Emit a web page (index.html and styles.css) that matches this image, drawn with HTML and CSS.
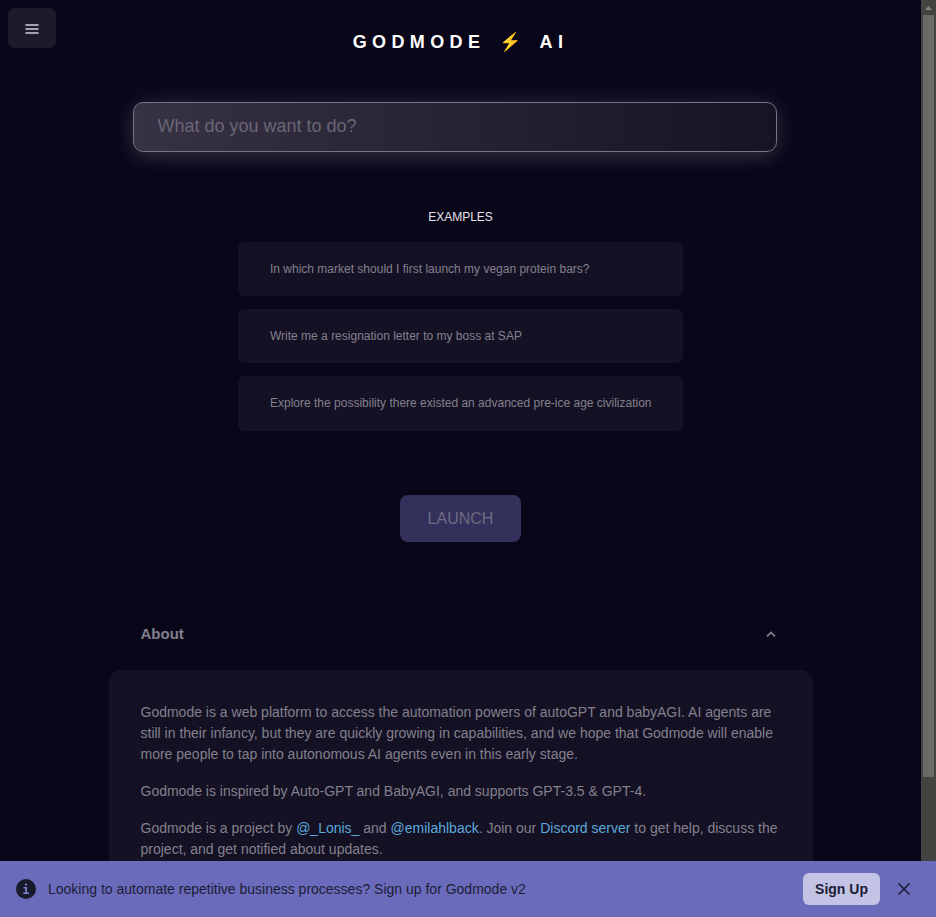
FILE: index.html
```html
<!DOCTYPE html>
<html lang="en">
<head>
<meta charset="utf-8">
<title>Godmode</title>
<link rel="stylesheet" href="styles.css">
</head>
<body>
<div class="viewport">
  <main class="page">
    <button class="menu" aria-label="Menu">
      <svg width="16" height="16" viewBox="0 0 16 16" fill="none" stroke="#a5a1b5" stroke-width="2" stroke-linecap="round"><path d="M2.2 4h11.6M2.2 8h11.6M2.2 12h11.6"/></svg>
    </button>
    <h1 class="title">GODMODE ⚡ AI</h1>
    <div class="container">
      <input class="prompt" type="text" placeholder="What do you want to do?">
      <section class="examples">
        <h2 class="examples-title">EXAMPLES</h2>
        <div class="example">In which market should I first launch my vegan protein bars?</div>
        <div class="example">Write me a resignation letter to my boss at SAP</div>
        <div class="example">Explore the possibility there existed an advanced pre-ice age civilization</div>
      </section>
      <button class="launch">LAUNCH</button>
      <div class="about-head">
        <span>About</span>
        <svg width="12" height="12" viewBox="0 0 12 12" fill="none" stroke="#85828f" stroke-width="1.7"><path d="M2 8.3 6 4.4l4 3.9"/></svg>
      </div>
      <section class="about">
        <p>Godmode is a web platform to access the automation powers of autoGPT and babyAGI. AI agents are still in their infancy, but they are quickly growing in capabilities, and we hope that Godmode will enable more people to tap into autonomous AI agents even in this early stage.</p>
        <p>Godmode is inspired by Auto-GPT and BabyAGI, and supports GPT-3.5 &amp; GPT-4.</p>
        <p>Godmode is a project by <a>@_Lonis_</a> and <a>@emilahlback</a>. Join our <a>Discord server</a> to get help, discuss the project, and get notified about updates.</p>
      </section>
    </div>
  </main>
  <div class="scrollbar">
    <div class="arrow"><svg width="7" height="4" viewBox="0 0 7 4"><path d="M0 4 3.5 0 7 4z" fill="#85857f"/></svg></div>
    <div class="thumb"></div>
  </div>
</div>
<footer class="banner">
  <svg class="info" width="20" height="20" viewBox="0 0 20 20"><circle cx="10" cy="10" r="10" fill="#171a2b"/><path d="M9 4.5h2v2H9zM7.5 8h3.5v5.6h2V15H7.2v-1.4h2.1V9.4H7.5z" fill="#7f7fcb"/></svg>
  <span class="banner-text">Looking to automate repetitive business processes? Sign up for Godmode v2</span>
  <button class="signup">Sign Up</button>
  <svg class="close" width="14" height="14" viewBox="0 0 14 14" fill="none" stroke="#1b1d35" stroke-width="1.6"><path d="m1.5 1.5 11 11M12.5 1.5l-11 11"/></svg>
</footer>
</body>
</html>
```
FILE: styles.css
```css
* { box-sizing: border-box; }
body {
  margin: 0;
  height: 917px;
  display: flex;
  flex-direction: column;
  overflow: hidden;
  background: #090619;
  color: #83808d;
  font-family: "Liberation Sans", Arial, sans-serif;
}
button { border: 0; padding: 0; font-family: inherit; }
.viewport { display: flex; height: 861px; flex: none; }
.page { position: relative; flex: 1; overflow: hidden; }
.menu {
  position: absolute;
  left: 8px;
  top: 8px;
  width: 48px;
  height: 40px;
  border-radius: 6px;
  background: #1d1a2b;
  display: flex;
  align-items: center;
  justify-content: center;
  padding-top: 2px;
}
.title {
  margin: 31px 0 0;
  height: 22px;
  line-height: 22px;
  text-align: center;
  font-size: 18px;
  letter-spacing: 5.4px;
  word-spacing: 3.3px;
  color: #fff;
}
.container { width: 704px; margin: 0 auto; display: flex; flex-direction: column; }
.prompt {
  width: 644px;
  height: 50px;
  margin: 49px 0 0 24px;
  padding: 0 24px 2px;
  border: 1px solid #77738a;
  border-radius: 10px;
  background: linear-gradient(90deg, #373244, #151424);
  box-shadow: 0 5px 18px rgba(255, 255, 255, .12), 0 0 35px rgba(255, 255, 255, .08);
  color: #85828f;
  font: 18px "Liberation Sans", Arial, sans-serif;
}
.prompt::placeholder { color: #6a6676; opacity: 1; }
.examples { width: 445px; margin: 57px auto 0; display: flex; flex-direction: column; gap: 13px; }
.examples-title { margin: 0 0 3px; font-size: 12px; font-weight: 400; line-height: 17px; text-align: center; color: #e4e2ea; }
.example {
  height: 54px;
  padding: 0 32px;
  border-radius: 6px;
  background: #151124;
  font-size: 12px;
  line-height: 54px;
  white-space: nowrap;
}
.example:last-child { height: 55px; }
.launch {
  align-self: center;
  width: 121px;
  height: 47px;
  margin-top: 64px;
  padding-top: 1px;
  border-radius: 8px;
  background: #33305c;
  color: #6e6b7f;
  font-size: 16px;
}
.about-head {
  display: flex;
  align-items: center;
  justify-content: space-between;
  height: 24px;
  margin: 80px 36px 0 32px;
  font-size: 15px;
  font-weight: 700;
}
.about-head span { padding-bottom: 2px; }
.about { margin-top: 24px; height: 260px; padding: 32px; border-radius: 12px; background: #151124; font-size: 14px; line-height: 21px; }
.about p { margin: 0 0 16px; }
.about a { color: #5ba9dc; }
.scrollbar { width: 15px; background: #434340; display: flex; flex-direction: column; align-items: center; }
.arrow { height: 15px; display: flex; align-items: center; }
.thumb { width: 11px; height: 762px; background: #6a6a68; }
.banner {
  height: 56px;
  flex: none;
  display: flex;
  align-items: center;
  padding: 0 25px 0 16px;
  background: #6b6bbc;
  color: #1b1d35;
  font-size: 14px;
}
.banner-text { flex: 1; margin-left: 12px; }
.signup { width: 77px; height: 32px; border-radius: 6px; background: #c3c3e5; color: #1b1d35; font-size: 14px; font-weight: 700; }
.close { margin-left: 17px; }
```
